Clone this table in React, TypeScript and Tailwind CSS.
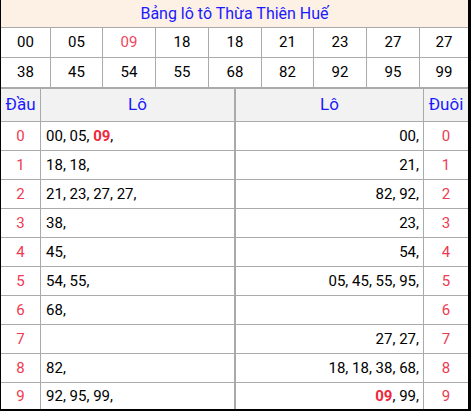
const topRows = [
  ["00", "05", "09", "18", "18", "21", "23", "27", "27"],
  ["38", "45", "54", "55", "68", "82", "92", "95", "99"],
];

type Lo = { n: string; hot?: boolean };

const dau: Lo[][] = [
  [{ n: "00" }, { n: "05" }, { n: "09", hot: true }],
  [{ n: "18" }, { n: "18" }],
  [{ n: "21" }, { n: "23" }, { n: "27" }, { n: "27" }],
  [{ n: "38" }],
  [{ n: "45" }],
  [{ n: "54" }, { n: "55" }],
  [{ n: "68" }],
  [],
  [{ n: "82" }],
  [{ n: "92" }, { n: "95" }, { n: "99" }],
];

const duoi: Lo[][] = [
  [{ n: "00" }],
  [{ n: "21" }],
  [{ n: "82" }, { n: "92" }],
  [{ n: "23" }],
  [{ n: "54" }],
  [{ n: "05" }, { n: "45" }, { n: "55" }, { n: "95" }],
  [],
  [{ n: "27" }, { n: "27" }],
  [{ n: "18" }, { n: "18" }, { n: "38" }, { n: "68" }],
  [{ n: "09", hot: true }, { n: "99" }],
];

function LoList({ items }: { items: Lo[] }) {
  return (
    <span className="whitespace-pre">
      {items.map((it, i) => (
        <span key={i}>
          {it.hot ? (
            <span className="font-bold text-[#f0283c]">{it.n}</span>
          ) : (
            it.n
          )}
          {i < items.length - 1 ? ", " : ","}
        </span>
      ))}
    </span>
  );
}

export default function App() {
  return (
    <div className="h-[411px] w-[471px] bg-white font-['Roboto',sans-serif] text-[15px] text-black">
      <div className="flex h-full flex-col border-b-2 border-l border-r-[3px] border-black">
        {/* Title */}
        <div className="flex h-[28px] shrink-0 items-center justify-center border-b border-[#aaaaaa] bg-[#fdf1e6] text-[16px] text-[#1a1aff]">
          Bảng lô tô Thừa Thiên Huế
        </div>

        {/* Numbers */}
        {topRows.map((row, r) => (
          <div
            key={r}
            className={`grid shrink-0 grid-cols-[50px_52px_53px_53px_53px_52px_53px_53px_48px] border-[#aaaaaa] ${
              r === 0 ? "h-[30px] border-b" : "h-[31px] border-b-2"
            }`}
          >
            {row.map((n, i) => (
              <div
                key={i}
                className={`flex items-center justify-center border-[#aaaaaa] ${
                  i < 8 ? "border-r" : ""
                } ${n === "09" ? "text-[#f0465c]" : ""}`}
              >
                {n}
              </div>
            ))}
          </div>
        ))}

        {/* Lo table */}
        <div className="grid h-[33px] shrink-0 grid-cols-[40px_195px_188px_44px] border-b border-[#aaaaaa] bg-[#f2f2f2] text-[17px] text-[#1a1aff]">
          <div className="flex items-center justify-center border-r border-[#aaaaaa]">
            Đầu
          </div>
          <div className="flex items-center justify-center border-r-2 border-[#aaaaaa]">
            Lô
          </div>
          <div className="flex items-center justify-center border-r border-[#aaaaaa]">
            Lô
          </div>
          <div className="flex items-center justify-center">Đuôi</div>
        </div>

        {dau.map((left, i) => (
          <div
            key={i}
            className={`grid grid-cols-[40px_195px_188px_44px] border-[#aaaaaa] ${
              i < 9 ? "h-[29px] shrink-0 border-b" : "flex-1"
            }`}
          >
            <div className="flex items-center justify-center border-r border-[#aaaaaa] text-[#ee3a52]">
              {i}
            </div>
            <div className="flex items-center border-r-2 border-[#aaaaaa] pl-[5px]">
              <LoList items={left} />
            </div>
            <div className="flex items-center justify-end border-r border-[#aaaaaa] pr-[4px]">
              <LoList items={duoi[i]} />
            </div>
            <div className="flex items-center justify-center text-[#ee3a52]">
              {i}
            </div>
          </div>
        ))}
      </div>
    </div>
  );
}
